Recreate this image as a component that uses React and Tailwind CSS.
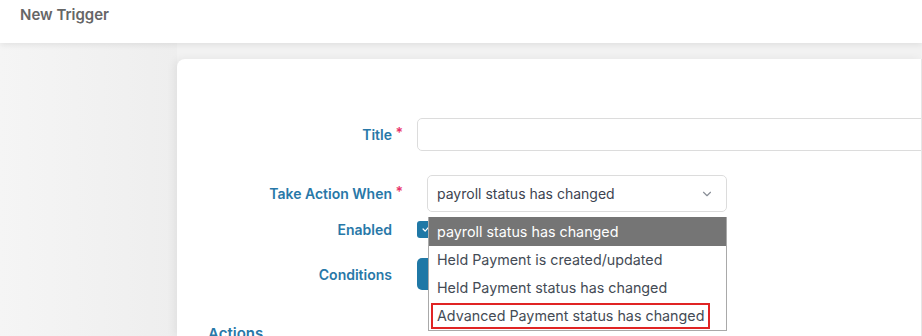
import React from 'react';

const labelCls = 'relative w-[240px] shrink-0 pr-[25px] text-right text-[14px] font-semibold text-[#2878a8]';

const Required = () => <span className="absolute right-[14px] top-[-2px] text-[#e8336b]">*</span>;

const options = [
  'payroll status has changed',
  'Held Payment is created/updated',
  'Held Payment status has changed',
  'Advanced Payment status has changed',
];

export default function App() {
  return (
    <div className="w-[922px] h-[336px] overflow-hidden bg-[#f2f2f2] font-['Inter','Liberation_Sans',sans-serif]">
      {/* Header */}
      <div className="relative z-10 h-[43px] bg-white px-5 pt-[5px] shadow-[0_2px_6px_rgba(0,0,0,0.08)]">
        <h1 className="text-[15px] font-semibold text-[#666666] leading-[20px]">New Trigger</h1>
      </div>

      <div className="flex h-[293px]">
        {/* Left gutter */}
        <div className="w-[177px] shrink-0 bg-gradient-to-r from-[#f5f5f5] to-[#eeeeee]" />

        {/* Card */}
        <div className="relative mt-[16px] flex-1 overflow-hidden rounded-tl-lg border-r border-[#e6e6e6] bg-white pt-[59px] shadow-[-3px_0_8px_rgba(0,0,0,0.06)]">
          {/* Title */}
          <div className="flex items-center">
            <label className={labelCls}>
              Title<Required />
            </label>
            <input
              type="text"
              className="h-[33px] w-[540px] shrink-0 rounded-[5px] border border-[#dcdcdc] bg-white outline-none"
            />
          </div>

          {/* Take Action When */}
          <div className="mt-[24px] flex items-center">
            <label className={labelCls}>
              Take Action When<Required />
            </label>
            <div className="ml-[10px] flex h-[37px] w-[300px] items-center justify-between rounded-[5px] border border-[#dcdcdc] bg-white pl-[9px] pr-[12px] text-[14px] text-[#3d4350]">
              <span>payroll status has changed</span>
              <svg width="14" height="14" viewBox="0 0 24 24" fill="none" stroke="#8a8f98" strokeWidth="2" strokeLinecap="round" strokeLinejoin="round">
                <path d="M6 9l6 6 6-6" />
              </svg>
            </div>
          </div>

          {/* Enabled */}
          <div className="mt-[7px] flex h-[20px] items-center">
            <label className={labelCls}>Enabled</label>
            <div className="flex h-[17px] w-[17px] items-center justify-center rounded-[3px] bg-[#1f78a6]">
              <svg width="10" height="10" viewBox="0 0 24 24" fill="none" stroke="white" strokeWidth="3" strokeLinecap="round" strokeLinejoin="round">
                <path d="M5 12l5 5 9-10" />
              </svg>
            </div>
          </div>

          {/* Conditions (button sits under the open list) */}
          <div className="mt-[19px] flex items-center">
            <label className={labelCls}>Conditions</label>
            <button aria-label="Add condition" className="h-[32px] w-[120px] rounded-[5px] bg-[#1f78a6]" />
          </div>

          {/* Actions */}
          <div className="mt-[33px] pl-[31px] text-[15px] font-semibold text-[#2878a8]">Actions</div>

          {/* Open select list */}
          <ul className="absolute left-[251px] top-[158px] w-[299px] border border-[#a9a9a9] border-t-0 bg-white text-[14.3px] text-[#444b55]">
            {options.map((opt, i) => (
              <li
                key={opt}
                className={
                  i === 0
                    ? 'flex h-[29px] items-center bg-[#757575] pl-[8px] text-white'
                    : 'flex h-[28px] items-center pl-[8px]'
                }
              >
                {i === 3 ? (
                  <span className="-ml-[6px] border-2 border-[#e02424] px-[4px] leading-[22px]">{opt}</span>
                ) : (
                  opt
                )}
              </li>
            ))}
          </ul>
        </div>
      </div>
    </div>
  );
}
